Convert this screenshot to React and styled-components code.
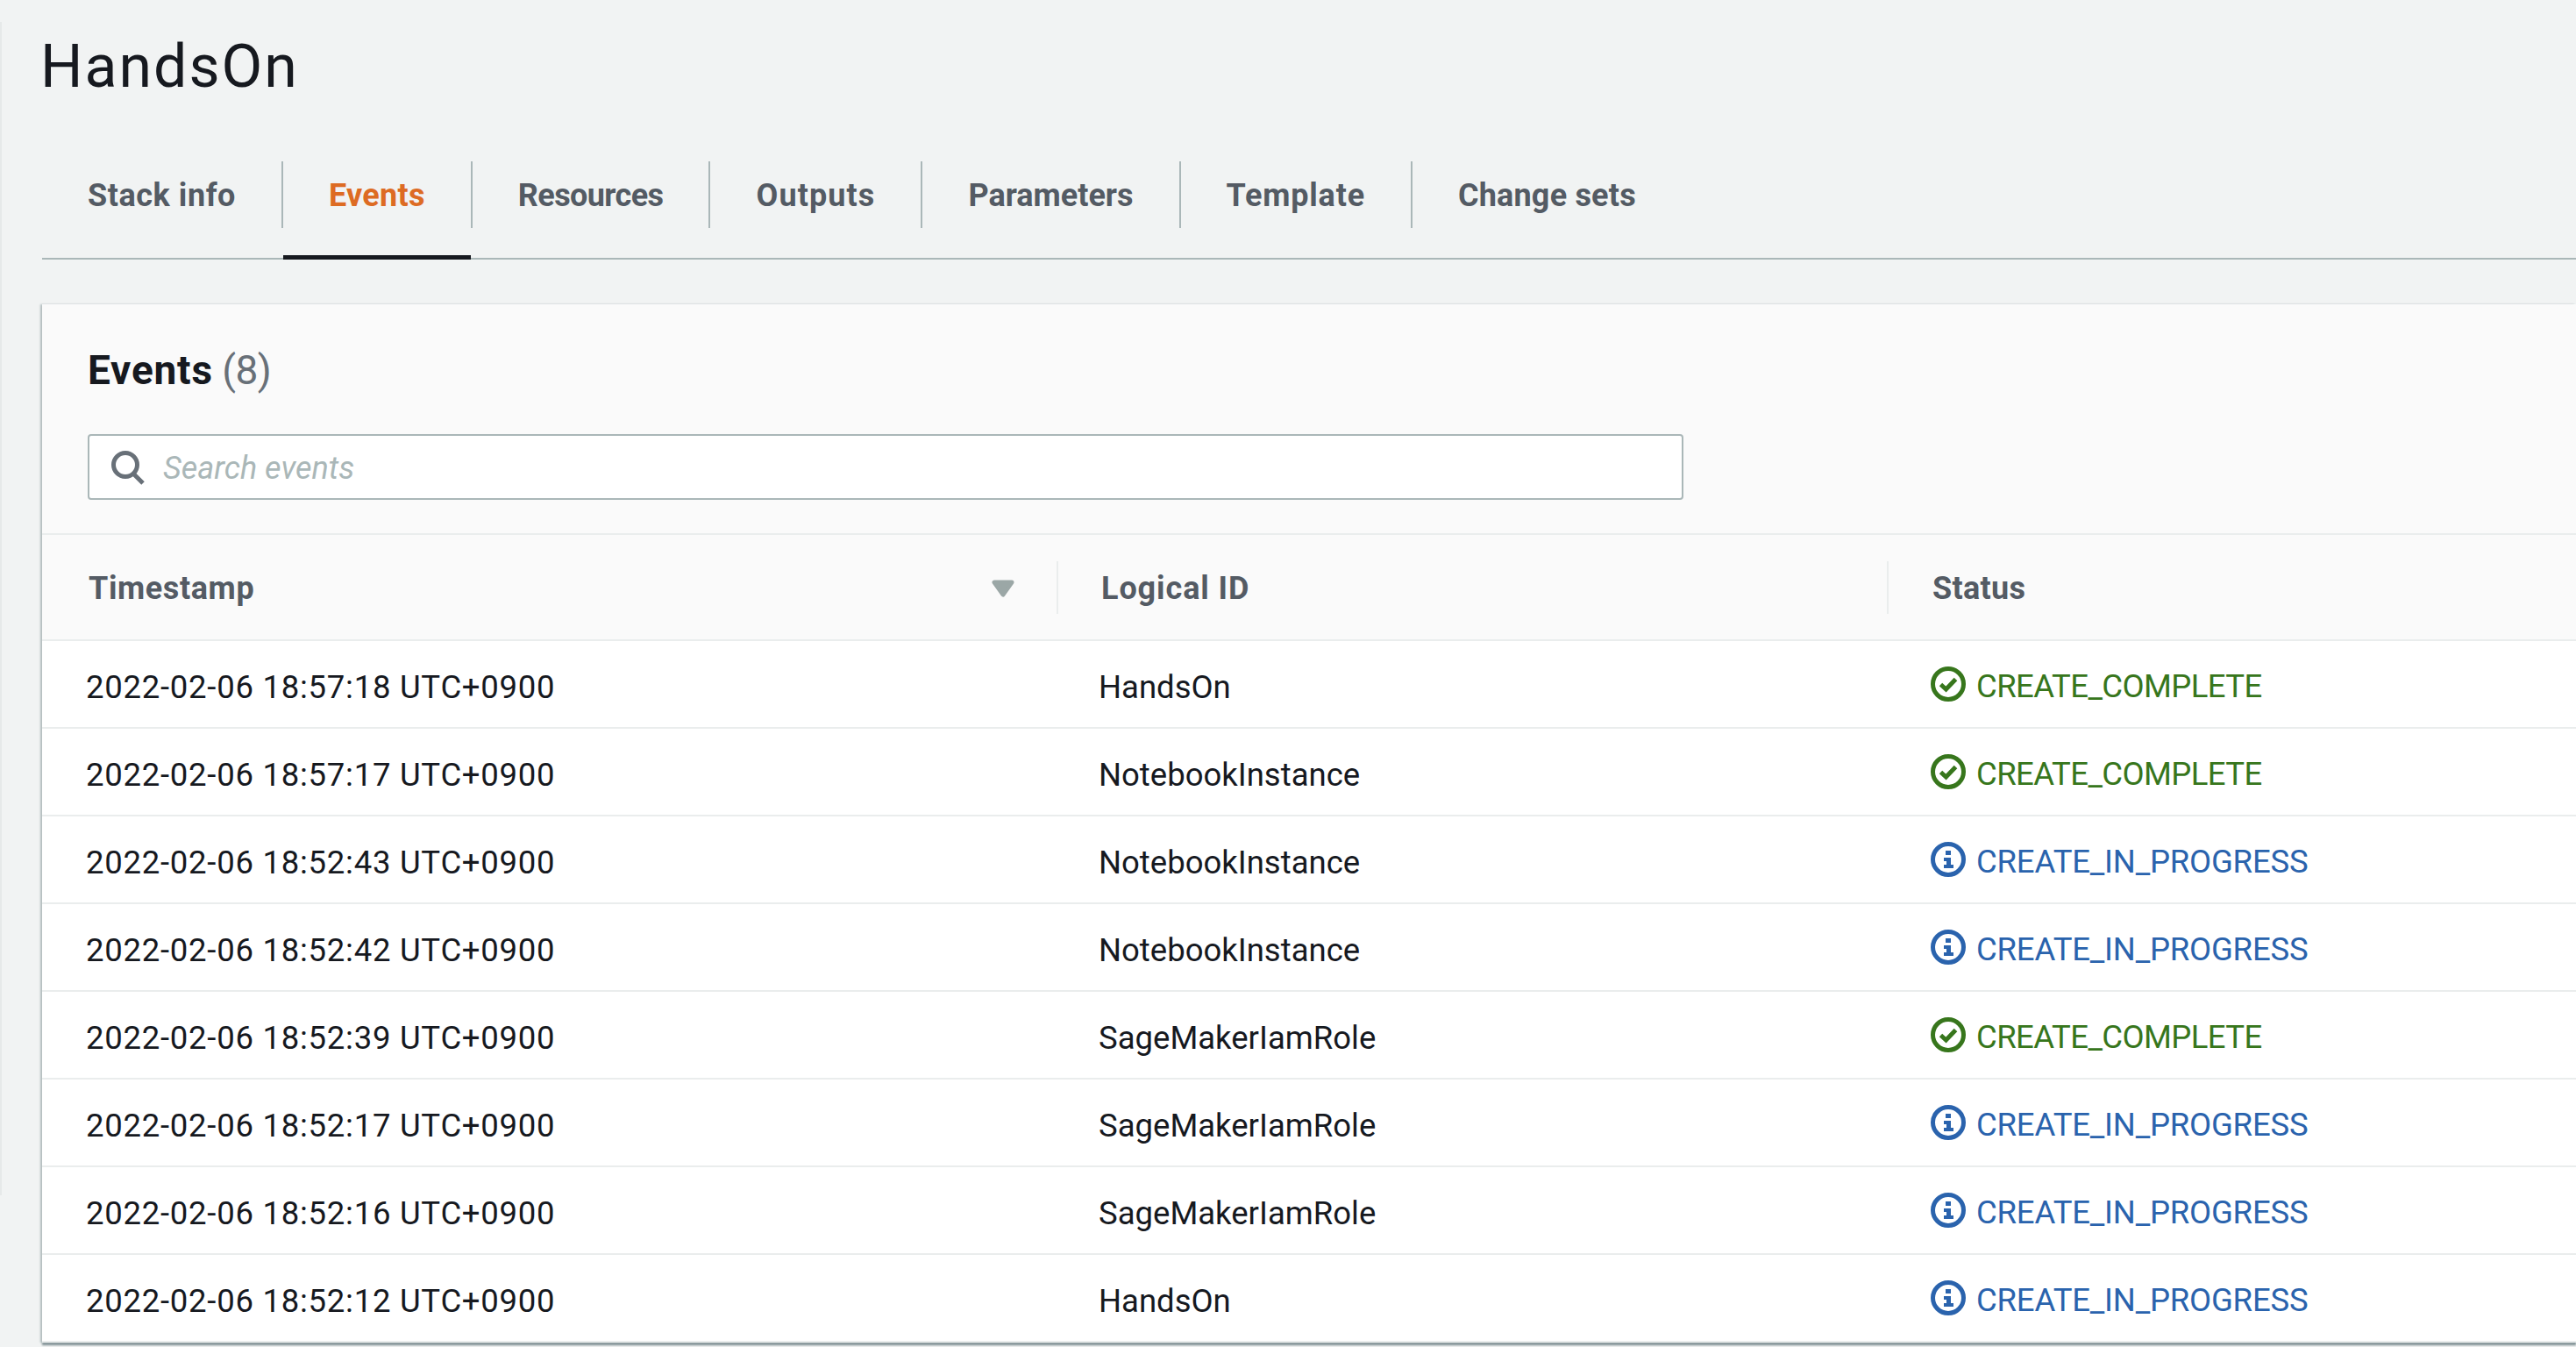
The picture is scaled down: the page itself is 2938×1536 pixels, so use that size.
import React from "react";
import styled, { createGlobalStyle } from "styled-components";

const Global = createGlobalStyle`
  html, body { margin: 0; padding: 0; background: #f1f3f3; }
  body { width: 2938px; height: 1536px; overflow: hidden; font-family: Roboto, "Open Sans", sans-serif; color: #16191f; }
`;

const Page = styled.div`
  width: 2938px;
  height: 1536px;
  box-sizing: border-box;
  padding-left: 48px;
  overflow: hidden;
  position: relative;
  &::before {
    content: "";
    position: absolute;
    left: 0;
    top: 25px;
    height: 1338px;
    width: 2px;
    background: #e6e9e9;
  }
`;

const Title = styled.h1`
  margin: 0 0 0 -2px;
  height: 150px;
  padding-top: 30px;
  box-sizing: border-box;
  font-size: 68px;
  line-height: 92px;
  font-weight: 400;
  letter-spacing: 2px;
  color: #16191f;
`;

const TabBar = styled.nav`
  display: flex;
  height: 146px;
  box-sizing: border-box;
  padding-top: 34px;
  border-bottom: 2px solid #aab7b8;
  align-items: flex-start;
`;

const Tab = styled.div`
  position: relative;
  height: 76px;
  box-sizing: border-box;
  padding: 2px 52px 0;
  display: flex;
  align-items: center;
  font-size: 36px;
  font-weight: 700;
  letter-spacing: ${(p) => p.$ls}px;
  color: ${(p) => (p.$active ? "#dd6b23" : "#545b64")};
  border-left: ${(p) => (p.$first ? "none" : "2px solid #aab7b8")};
  &::after {
    content: "";
    display: ${(p) => (p.$active ? "block" : "none")};
    position: absolute;
    left: 0;
    right: 0;
    bottom: -36px;
    height: 5px;
    background: #16191f;
  }
`;

const Card = styled.section`
  margin-top: 51px;
  background: #fff;
  box-shadow: -2px 0 2px #b4bfc0, 0 3px 2px #7f8f93;
  height: 1184px;
`;

const CardHead = styled.header`
  height: 263px;
  box-sizing: border-box;
  background: #fafafa;
  padding: 44px 52px 0;
  border-bottom: 2px solid #eaeded;
`;

const CardTitle = styled.h2`
  margin: 0;
  font-size: 46px;
  line-height: 62px;
  font-weight: 700;
  letter-spacing: 0.8px;
  color: #16191f;
`;

const Count = styled.span`
  font-weight: 400;
  letter-spacing: -0.5px;
  margin-left: -2px;
  color: #687078;
`;

const Search = styled.div`
  margin-top: 42px;
  width: 1820px;
  height: 75px;
  box-sizing: border-box;
  display: flex;
  align-items: center;
  gap: 20px;
  padding-left: 24px;
  background: #fff;
  border: 2px solid #aab7b8;
  border-radius: 4px;
`;

const Placeholder = styled.span`
  font-size: 36px;
  font-style: italic;
  color: #aab7b8;
  padding-top: 3px;
`;

const Grid = styled.div`
  display: grid;
  grid-template-columns: 1157px 947px 1fr;
`;

const HeadCell = styled.div`
  position: relative;
  height: 121px;
  box-sizing: border-box;
  background: #fafafa;
  border-bottom: 2px solid #eaeded;
  display: flex;
  align-items: center;
  justify-content: space-between;
  padding: 2px 48px 0 ${(p) => p.$pad || 52}px;
  font-size: 36px;
  font-weight: 700;
  letter-spacing: ${(p) => p.$ls}px;
  color: #545b64;
  &::before {
    content: "";
    display: ${(p) => (p.$first ? "none" : "block")};
    position: absolute;
    left: 0;
    top: 30px;
    height: 60px;
    width: 2px;
    background: #eaeded;
  }
`;

const Cell = styled.div`
  height: 100px;
  box-sizing: border-box;
  border-bottom: 2px solid #eaeded;
  display: flex;
  align-items: center;
  padding: 6px 0 0 ${(p) => p.$pad}px;
  font-size: 36.5px;
  letter-spacing: ${(p) => p.$ls || 0}px;
  color: #16191f;
`;

const Status = styled.span`
  display: flex;
  align-items: center;
  gap: 12px;
  margin-top: -2px;
  letter-spacing: ${(p) => p.$ls}px;
  color: ${(p) => p.$color};
  svg {
    flex: none;
    margin-top: -4px;
  }
`;

const rows = [
  ["2022-02-06 18:57:18 UTC+0900", "HandsOn", "ok"],
  ["2022-02-06 18:57:17 UTC+0900", "NotebookInstance", "ok"],
  ["2022-02-06 18:52:43 UTC+0900", "NotebookInstance", "info"],
  ["2022-02-06 18:52:42 UTC+0900", "NotebookInstance", "info"],
  ["2022-02-06 18:52:39 UTC+0900", "SageMakerIamRole", "ok"],
  ["2022-02-06 18:52:17 UTC+0900", "SageMakerIamRole", "info"],
  ["2022-02-06 18:52:16 UTC+0900", "SageMakerIamRole", "info"],
  ["2022-02-06 18:52:12 UTC+0900", "HandsOn", "info"],
];

const tabs = [
  ["Stack info", 0.55],
  ["Events", 0.3],
  ["Resources", -0.6],
  ["Outputs", 1.1],
  ["Parameters", 0],
  ["Template", 0.8],
  ["Change sets", 0.2],
];

const OkIcon = () => (
  <svg width="40" height="40" viewBox="0 0 40 40" fill="none">
    <circle cx="20" cy="20" r="17.5" stroke="#37761c" strokeWidth="5" />
    <path d="M11.5 20.5 L17.5 26 L28.5 14.5" stroke="#37761c" strokeWidth="5" />
  </svg>
);

const InfoIcon = () => (
  <svg width="40" height="40" viewBox="0 0 40 40" fill="none">
    <circle cx="20" cy="20" r="17.5" stroke="#2a63ad" strokeWidth="5" />
    <path d="M17 10h6v5h-6z M15 18h8v8h3v4H15v-4h3v-4h-3z" fill="#2a63ad" />
  </svg>
);

const SearchIcon = () => (
  <svg width="40" height="40" viewBox="0 0 40 40" fill="none" stroke="#687078" strokeWidth="5">
    <circle cx="17" cy="17" r="13.5" />
    <path d="M26 27 L37 38" />
  </svg>
);

const SortIcon = () => (
  <svg width="26" height="20" viewBox="0 0 26 20">
    <path d="M3 3H23L13 17z" fill="#9ba7a6" stroke="#9ba7a6" strokeWidth="5" strokeLinejoin="round" />
  </svg>
);

export default function App() {
  return (
    <Page>
      <Global />
      <Title>HandsOn</Title>
      <TabBar>
        {tabs.map(([label, ls], i) => (
          <Tab key={label} $first={i === 0} $active={label === "Events"} $ls={ls}>
            {label}
          </Tab>
        ))}
      </TabBar>
      <Card>
        <CardHead>
          <CardTitle>
            Events <Count>(8)</Count>
          </CardTitle>
          <Search>
            <SearchIcon />
            <Placeholder>Search events</Placeholder>
          </Search>
        </CardHead>
        <Grid>
          <HeadCell $first $ls={0.6} $pad={53}>
            Timestamp
            <SortIcon />
          </HeadCell>
          <HeadCell $ls={0.9} $pad={51}>Logical ID</HeadCell>
          <HeadCell $ls={0.3}>Status</HeadCell>
          {rows.map(([time, id, kind]) => (
            <React.Fragment key={time}>
              <Cell $pad={50} $ls={0.74}>{time}</Cell>
              <Cell $pad={48}>{id}</Cell>
              <Cell $pad={50}>
                {kind === "ok" ? (
                  <Status $color="#37761c" $ls={-0.6}>
                    <OkIcon />
                    CREATE_COMPLETE
                  </Status>
                ) : (
                  <Status $color="#2a63ad" $ls={-0.2}>
                    <InfoIcon />
                    CREATE_IN_PROGRESS
                  </Status>
                )}
              </Cell>
            </React.Fragment>
          ))}
        </Grid>
      </Card>
    </Page>
  );
}
